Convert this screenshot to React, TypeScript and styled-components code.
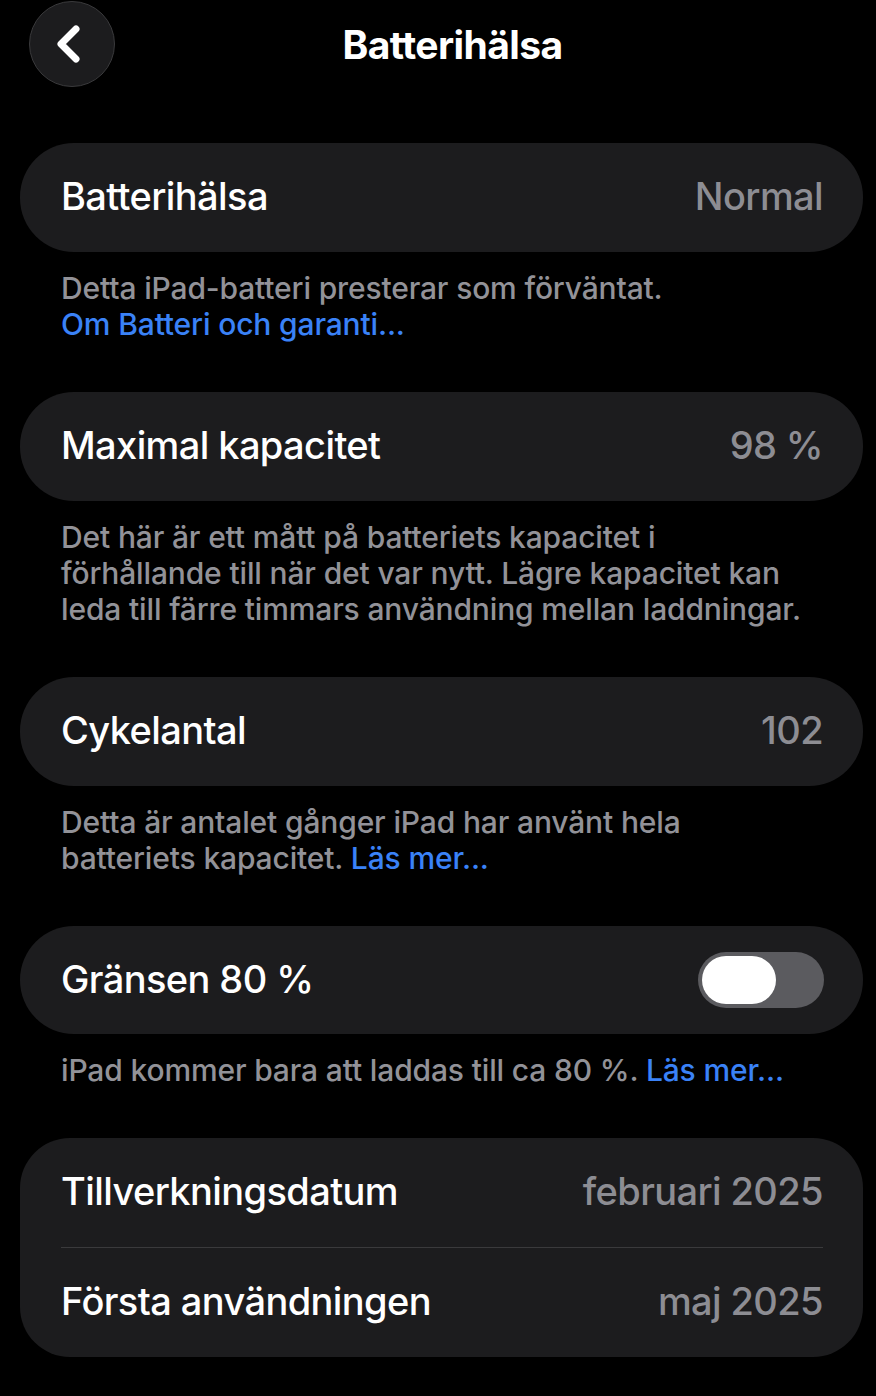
import React from "react";
import styled, { createGlobalStyle } from "styled-components";

const Global = createGlobalStyle`
  html, body { margin: 0; padding: 0; background: #000; }
  body { font-family: Inter, "Noto Sans", sans-serif; -webkit-font-smoothing: antialiased; }
`;

const Page = styled.div`
  width: 876px;
  min-height: 1396px;
  background: #000;
  color: #fff;
  box-sizing: border-box;
  padding: 0 13px 0 20px;
`;

const Header = styled.header`
  height: 88px;
  display: grid;
  grid-template-columns: 110px 1fr 110px;
  align-items: center;
  margin-bottom: 55px;
`;

const BackButton = styled.button`
  width: 86px;
  height: 86px;
  margin-left: 9px;
  border-radius: 50%;
  background: #1c1c1e;
  border: 1.5px solid #3a3a3c;
  display: flex;
  align-items: center;
  justify-content: center;
  padding: 0 6px 0 0;
`;

const Title = styled.h1`
  margin: 0;
  text-align: center;
  font-size: 39px;
  font-weight: 700;
  letter-spacing: -0.6px;
  padding-left: 22px;
`;

const Card = styled.section<{ $radius?: number }>`
  background: #1c1c1e;
  border-radius: ${(p) => p.$radius ?? 54}px;
  padding: 0 40px 0 41px;
`;

const Row = styled.div<{ $divider?: boolean; $height?: number }>`
  height: ${(p) => p.$height ?? (p.$divider ? 110 : 109)}px;
  box-sizing: border-box;
  display: flex;
  align-items: center;
  justify-content: space-between;
  padding-bottom: 3px;
  border-bottom: ${(p) => (p.$divider ? "1.5px solid #3a3a3c" : "none")};
`;

const Label = styled.span`
  font-size: 38px;
  font-weight: 500;
  letter-spacing: -0.6px;
  color: #fff;
`;

const Value = styled.span`
  font-size: 38px;
  font-weight: 500;
  letter-spacing: -0.6px;
  color: #8d8d93;
`;

const Footer = styled.p`
  margin: 0;
  padding: 18px 0 50px 41px;
  font-size: 30px;
  line-height: 36px;
  font-weight: 500;
  color: #929298;
  letter-spacing: -0.15px;
  white-space: nowrap;
`;

const Link = styled.a`
  color: #3a82f7;
  text-decoration: none;
`;

const Toggle = styled.div`
  width: 126px;
  height: 56px;
  border-radius: 28px;
  background: #5b5b5f;
  display: flex;
  align-items: center;
  padding: 0 4px;
  box-sizing: border-box;
  margin-right: -1px;
  margin-top: 3px;
`;

const Knob = styled.div`
  width: 74px;
  height: 48px;
  border-radius: 24px;
  background: #fff;
`;

export default function App() {
  return (
    <>
      <Global />
      <Page>
        <Header>
          <BackButton aria-label="Tillbaka">
            <svg width="34" height="40" viewBox="0 0 34 40" fill="none">
              <path
                d="M24 5 L9 20 L24 35"
                stroke="#fff"
                strokeWidth="7"
                strokeLinecap="round"
                strokeLinejoin="round"
              />
            </svg>
          </BackButton>
          <Title>Batterihälsa</Title>
          <div />
        </Header>

        <Card>
          <Row>
            <Label>Batterihälsa</Label>
            <Value>Normal</Value>
          </Row>
        </Card>
        <Footer>
          Detta iPad-batteri presterar som förväntat.
          <br />
          <Link>Om Batteri och garanti...</Link>
        </Footer>

        <Card>
          <Row>
            <Label>Maximal kapacitet</Label>
            <Value>98 %</Value>
          </Row>
        </Card>
        <Footer>
          Det här är ett mått på batteriets kapacitet i
          <br />
          förhållande till när det var nytt. Lägre kapacitet kan
          <br />
          leda till färre timmars användning mellan laddningar.
        </Footer>

        <Card>
          <Row>
            <Label>Cykelantal</Label>
            <Value>102</Value>
          </Row>
        </Card>
        <Footer>
          Detta är antalet gånger iPad har använt hela
          <br />
          batteriets kapacitet. <Link>Läs mer...</Link>
        </Footer>

        <Card>
          <Row $height={108}>
            <Label>Gränsen 80 %</Label>
            <Toggle>
              <Knob />
            </Toggle>
          </Row>
        </Card>
        <Footer>
          iPad kommer bara att laddas till ca 80 %. <Link>Läs mer...</Link>
        </Footer>

        <Card $radius={50}>
          <Row $divider>
            <Label>Tillverkningsdatum</Label>
            <Value>februari 2025</Value>
          </Row>
          <Row>
            <Label>Första användningen</Label>
            <Value>maj 2025</Value>
          </Row>
        </Card>
      </Page>
    </>
  );
}
